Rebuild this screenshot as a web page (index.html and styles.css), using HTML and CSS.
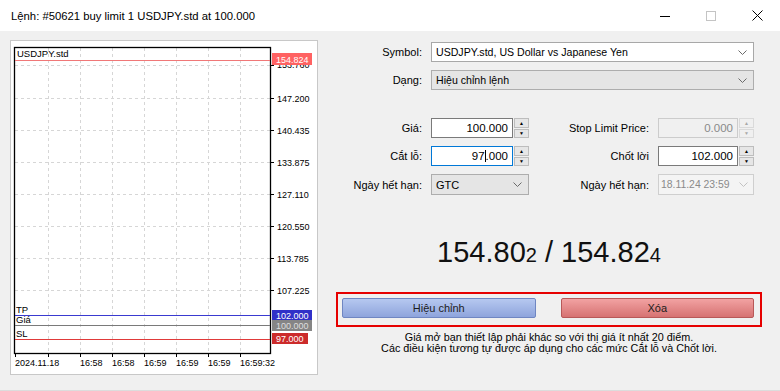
FILE: index.html
```html
<!DOCTYPE html>
<html lang="vi">
<head>
    <meta charset="UTF-8">
    <title>Lệnh #50621</title>
    <link rel="stylesheet" href="styles.css">
</head>
<body>
    <!-- Barra de título -->
    <div class="titlebar">
        <span class="title">Lệnh: #50621 buy limit 1 USDJPY.std at 100.000</span>
        <div class="controls">
            <div class="ctl"><svg width="10" height="10" viewBox="0 0 10 10"><path d="M0 5.5H10" stroke="#000" stroke-width="1"/></svg></div>
            <div class="ctl"><svg width="10" height="10" viewBox="0 0 10 10"><rect x="0.5" y="0.5" width="9" height="9" fill="none" stroke="#c4c4c4"/></svg></div>
            <div class="ctl"><svg width="11" height="11" viewBox="0 0 11 11"><path d="M0.5 0.5L10.5 10.5M10.5 0.5L0.5 10.5" stroke="#000" stroke-width="1"/></svg></div>
        </div>
    </div>

    <div class="main">
        <!-- Gráfico -->
        <div class="chart">
            <svg width="306" height="333" viewBox="11 41 306 333">
                <path class="grid" d="M15 65.5H270M15 98.5H270M15 130.5H270M15 162.5H270M15 194.5H270M15 226.5H270M15 258.5H270M15 290.5H270M48.5 48V353M80.5 48V353M112.5 48V353M144.5 48V353M176.5 48V353M208.5 48V353M240.5 48V353"/>
                <path class="ticks" d="M270 65.5h4M270 98.5h4M270 130.5h4M270 162.5h4M270 194.5h4M270 226.5h4M270 258.5h4M270 290.5h4M15.5 353v4M48.5 353v4M80.5 353v4M112.5 353v4M144.5 353v4M176.5 353v4M208.5 353v4M240.5 353v4"/>
                <rect class="plot" x="14.5" y="47.5" width="256" height="306"/>
                <path d="M15 60.5H270" stroke="#f07878"/>
                <path d="M15 315.5H270" stroke="#3a3ad0"/>
                <path d="M15 325.5H270" stroke="#7a7a7a"/>
                <path d="M15 339.5H270" stroke="#e03a3a"/>

                <text class="sym" x="17" y="57">USDJPY.std</text>
                <text class="ax" x="277" y="67.5">153.760</text>
                <text class="ax" x="277" y="101.5">147.200</text>
                <text class="ax" x="277" y="133.5">140.435</text>
                <text class="ax" x="277" y="165.5">133.875</text>
                <text class="ax" x="277" y="197.5">127.110</text>
                <text class="ax" x="277" y="229.5">120.550</text>
                <text class="ax" x="277" y="261.5">113.785</text>
                <text class="ax" x="277" y="293.5">107.225</text>

                <rect x="272" y="53" width="40" height="12" fill="#ff6262"/>
                <text class="tag" x="276" y="62.5">154.824</text>
                <rect x="272" y="310" width="40" height="10" fill="#3030c8"/>
                <text class="tag" x="276" y="318.5">102.000</text>
                <rect x="272" y="320" width="40" height="11" fill="#858585"/>
                <text class="tag dim" x="276" y="329">100.000</text>
                <rect x="272" y="333" width="36" height="11" fill="#cc2b2b"/>
                <text class="tag" x="276" y="342">97.000</text>

                <text class="mark" x="16" y="312.5">TP</text>
                <text class="mark" x="16" y="322.5">Giá</text>
                <text class="mark" x="16" y="336.5">SL</text>

                <text class="ax" x="15" y="366">2024.11.18</text>
                <text class="ax" x="80" y="366">16:58</text>
                <text class="ax" x="112" y="366">16:58</text>
                <text class="ax" x="144" y="366">16:59</text>
                <text class="ax" x="176" y="366">16:59</text>
                <text class="ax" x="208" y="366">16:59</text>
                <text class="ax" x="240" y="366">16:59:32</text>
            </svg>
        </div>

        <!-- Formulário -->
        <div class="form">
            <div class="fields">
                <label class="lbl">Symbol:</label>
                <div class="select white wide">USDJPY.std, US Dollar vs Japanese Yen<svg class="chev" width="9" height="5" viewBox="0 0 9 5"><path d="M0.5 0.5L4.5 4.5L8.5 0.5"/></svg></div>

                <label class="lbl">Dạng:</label>
                <div class="select wide">Hiệu chỉnh lệnh<svg class="chev" width="9" height="5" viewBox="0 0 9 5"><path d="M0.5 0.5L4.5 4.5L8.5 0.5"/></svg></div>

                <div class="spacer"></div>

                <label class="lbl">Giá:</label>
                <div class="num">
                    <div class="box">100.000</div>
                    <div class="spin"><span>&#9650;</span><span>&#9660;</span></div>
                </div>
                <label class="lbl">Stop Limit Price:</label>
                <div class="num off">
                    <div class="box">0.000</div>
                    <div class="spin"><span>&#9650;</span><span>&#9660;</span></div>
                </div>

                <label class="lbl">Cắt lỗ:</label>
                <div class="num">
                    <div class="box focus">97<span class="caret"></span>.000</div>
                    <div class="spin"><span>&#9650;</span><span>&#9660;</span></div>
                </div>
                <label class="lbl">Chốt lời</label>
                <div class="num">
                    <div class="box">102.000</div>
                    <div class="spin"><span>&#9650;</span><span>&#9660;</span></div>
                </div>

                <label class="lbl">Ngày hết hạn:</label>
                <div class="select">GTC<svg class="chev" width="9" height="5" viewBox="0 0 9 5"><path d="M0.5 0.5L4.5 4.5L8.5 0.5"/></svg></div>
                <label class="lbl">Ngày hết hạn:</label>
                <div class="select off">18.11.24 23:59<svg class="chev" width="9" height="5" viewBox="0 0 9 5"><path d="M0.5 0.5L4.5 4.5L8.5 0.5"/></svg></div>
            </div>

            <div class="bottom">
                <div class="quote">154.80<small>2</small> / 154.82<small>4</small></div>
                <div class="actions">
                    <button class="btn blue">Hiệu chỉnh</button>
                    <button class="btn red">Xóa</button>
                </div>
                <p class="note">Giá mở bạn thiết lập phải khác so với thị giá ít nhất 20 điểm.<br>Các điều kiện tương tự được áp dụng cho các mức Cắt lỗ và Chốt lời.</p>
            </div>
        </div>
    </div>
</body>
</html>
```
FILE: styles.css
```css
* {
    margin: 0;
    padding: 0;
    box-sizing: border-box;
}
body {
    width: 780px;
    height: 391px;
    overflow: hidden;
    background: #f0f0f0;
    font-family: 'Liberation Sans', Arial, sans-serif;
    font-size: 11px;
    color: #000;
    border-bottom: 1px solid #dcdcdc;
}
.titlebar {
    height: 31px;
    background: #fff;
    display: flex;
    align-items: center;
    padding-left: 11px;
    font-size: 11.3px;
}
.title {
    flex: 1;
}
.controls {
    display: flex;
    height: 31px;
}
.ctl {
    width: 46px;
    display: flex;
    align-items: center;
    justify-content: center;
}
.ctl svg {
    display: block;
}
.main {
    display: flex;
    padding: 9px 0 0 10px;
}
.chart {
    width: 308px;
    height: 335px;
    border: 1px solid #c8c8c8;
    background: #fff;
}
.chart svg {
    display: block;
}
.grid {
    stroke: #d6d6d6;
    stroke-dasharray: 3 3;
    fill: none;
}
.ticks {
    stroke: #000;
    fill: none;
}
.plot {
    fill: none;
    stroke: #000;
    stroke-width: 1.3;
}
.ax, .sym, .mark, .tag {
    font-family: 'Liberation Sans', Arial, sans-serif;
    font-size: 9px;
    fill: #000;
}
.sym {
    font-size: 9.5px;
}
.mark {
    font-size: 9.5px;
}
.tag {
    fill: #fff;
}
.tag.dim {
    fill: #dedede;
}
.form {
    margin-left: 12px;
    width: 450px;
    padding-top: 2px;
}
.fields {
    display: grid;
    grid-template-columns: 92px 98px 111px 96px;
    grid-template-rows: 20px 20px 12px 20px 20px 21px;
    column-gap: 9px;
    row-gap: 8px;
}
.spacer {
    grid-column: 1 / -1;
}
.lbl {
    display: flex;
    align-items: center;
    justify-content: flex-end;
    white-space: nowrap;
}
.select {
    display: flex;
    align-items: center;
    justify-content: space-between;
    border: 1px solid #adadad;
    background: #e5e5e5;
    padding: 0 6px 0 4px;
}
.select.white {
    background: #fff;
    border-color: #a8a8a8;
}
.select.wide {
    grid-column: 2 / 5;
    font-size: 10.6px;
}
.select.off {
    background: #f4f4f4;
    border-color: #cfcfcf;
    color: #8a8a8a;
    font-size: 10.4px;
    padding-left: 2px;
    padding-right: 5px;
}
.chev {
    fill: none;
    stroke: #6a6a6a;
    flex-shrink: 0;
}
.off .chev {
    stroke: #c2c2c2;
}
.num {
    display: flex;
    gap: 1px;
    height: 20px;
}
.box {
    flex: 1;
    border: 1px solid #7a7a7a;
    background: #fff;
    display: flex;
    align-items: center;
    justify-content: flex-end;
    padding-right: 4px;
    font-size: 11.5px;
}
.box.focus {
    border-color: #0078d7;
}
.caret {
    width: 1px;
    height: 12px;
    background: #000;
}
.spin {
    width: 15px;
    display: flex;
    flex-direction: column;
    gap: 1px;
}
.spin span {
    flex: 1;
    display: flex;
    align-items: center;
    justify-content: center;
    background: #e6e6e6;
    border: 1px solid #bdbdbd;
    font-size: 5px;
    color: #000;
}
.num.off .box {
    background: #f0f0f0;
    border-color: #cccccc;
    color: #8a8a8a;
}
.num.off .spin span {
    background: #f0f0f0;
    border-color: #dadada;
    color: #a8a8a8;
}
.bottom {
    margin-left: 6px;
    width: 426px;
}
.quote {
    margin-top: 39px;
    height: 36px;
    line-height: 36px;
    text-align: center;
    font-size: 29px;
    color: #111;
}
.quote small {
    font-size: 20px;
}
.actions {
    margin-top: 22px;
    display: flex;
    gap: 25px;
    border: 2px solid #e60000;
    padding: 4px 6px 7px 4px;
}
.btn {
    flex: 1;
    height: 20px;
    font-family: 'Liberation Sans', Arial, sans-serif;
    font-size: 11px;
    color: #1c1c1c;
    border-radius: 2px;
    cursor: pointer;
}
.btn.blue {
    background: linear-gradient(#b6c8f0, #8ea4dc);
    border: 1px solid #6f86c2;
}
.btn.red {
    background: linear-gradient(#f2a2a2, #d67272);
    border: 1px solid #b85858;
}
.note {
    margin-top: 5px;
    text-align: center;
    line-height: 11px;
    font-size: 10.8px;
}
```
